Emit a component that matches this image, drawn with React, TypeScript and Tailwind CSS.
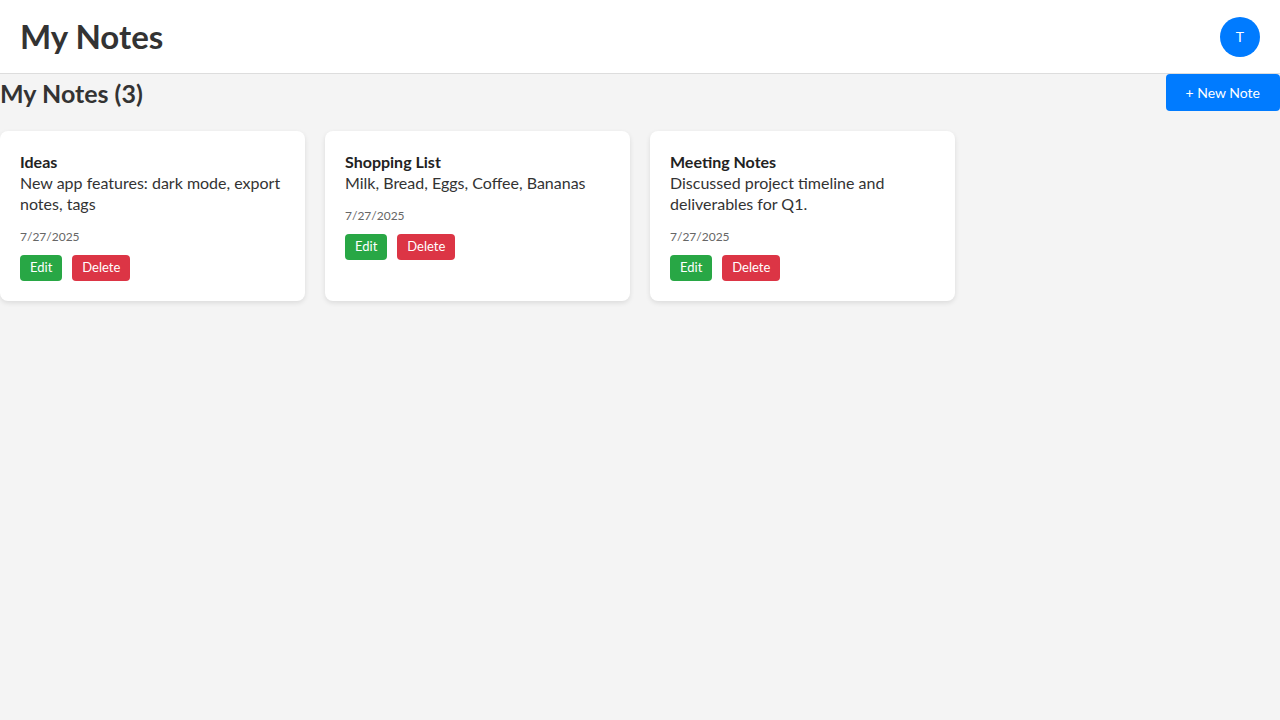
import React from "react";

const notes = [
  { title: "Ideas", body: "New app features: dark mode, export notes, tags", date: "7/27/2025" },
  { title: "Shopping List", body: "Milk, Bread, Eggs, Coffee, Bananas", date: "7/27/2025" },
  { title: "Meeting Notes", body: "Discussed project timeline and deliverables for Q1.", date: "7/27/2025" },
];

export default function App() {
  return (
    <div
      className="min-h-screen bg-[#f4f4f4] text-[#333]"
      style={{ fontFamily: 'Lato, "Noto Sans", sans-serif' }}
    >
      <header className="flex items-center justify-between bg-white px-5 py-4 border-b border-[#ddd]">
        <h1 className="text-[33px] font-bold leading-[41px]">My Notes</h1>
        <div className="w-10 h-10 rounded-full bg-[#007bff] text-white flex items-center justify-center text-[14px]">
          T
        </div>
      </header>
      <main>
        <div className="flex items-center justify-between mb-5">
          <h2 className="text-[25px] font-bold leading-[30px]">My Notes (3)</h2>
          <button className="bg-[#007bff] text-white text-[14px] rounded px-5 h-[37px]">+ New Note</button>
        </div>
        <div className="grid grid-cols-4 gap-5">
          {notes.map((n) => (
            <div key={n.title} className="bg-white rounded-lg p-5 shadow-[0_2px_5px_rgba(0,0,0,0.1)]">
              <h3 className="text-[16px] font-bold leading-[21px] text-[#222]">{n.title}</h3>
              <p className="text-[16px] leading-[21px] text-[#333]">{n.body}</p>
              <div className="text-[12px] leading-[16px] text-[#666] mt-[15px]">{n.date}</div>
              <div className="flex gap-[10px] mt-[10px]">
                <button className="bg-[#28a745] text-white text-[13px] rounded px-[10px] h-[26px]">Edit</button>
                <button className="bg-[#dc3545] text-white text-[13px] rounded px-[10px] h-[26px]">Delete</button>
              </div>
            </div>
          ))}
        </div>
      </main>
    </div>
  );
}
